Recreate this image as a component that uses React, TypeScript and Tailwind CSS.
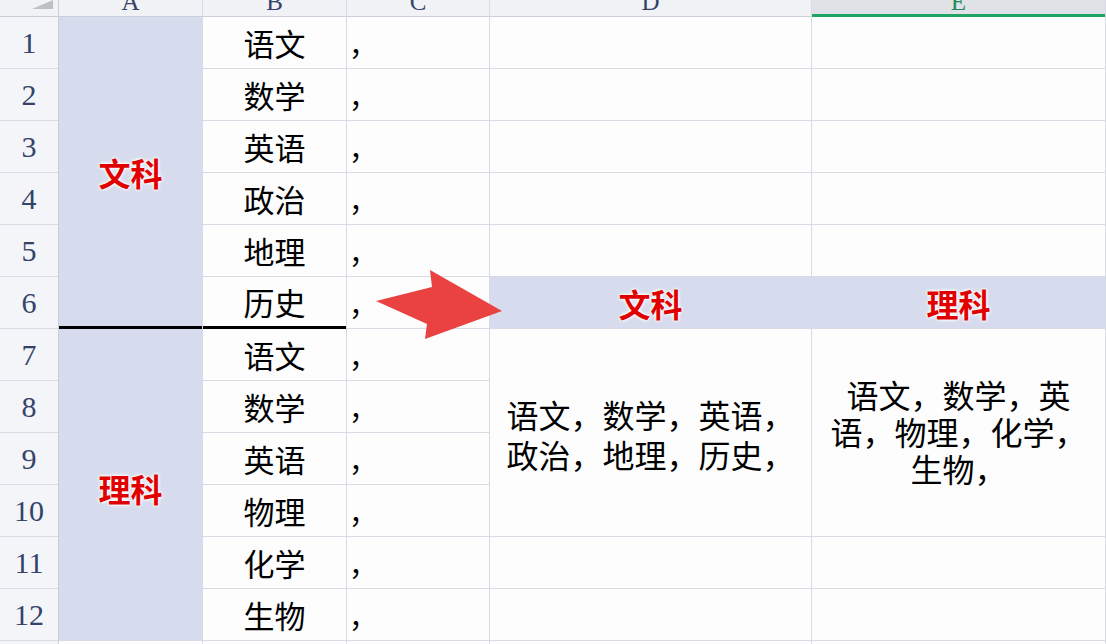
import React from "react"

const subjects = ["语文", "数学", "英语", "政治", "地理", "历史", "语文", "数学", "英语", "物理", "化学", "生物"]

const line = "border-[#d7dbe4]"
const redLabel =
  "text-[32px] font-bold text-[#e00000] leading-none [text-shadow:0_0_2px_#fff,0_0_3px_#fff,0_0_4px_#fff]"

function ColHead({ label, active }: { label: string; active?: boolean }) {
  return (
    <div
      className={`h-[17px] shrink-0 overflow-hidden flex justify-center font-['Liberation_Serif',serif] ${
        active
          ? "bg-[#e1e2e7] border-b-[3px] border-b-[#1fa463] text-[#1f8c5c]"
          : "bg-[#f1f2f5] border-b border-b-[#c9ced8] text-[#33436a]"
      }`}
    >
      <span className="text-[25px] leading-none mt-[-11px]">{label}</span>
    </div>
  )
}

function Blank({ tall }: { tall?: boolean }) {
  return <div className={`${tall ? "h-[52px]" : "h-[30px]"} shrink-0 border-b ${line}`} />
}

export default function App() {
  return (
    <div className="relative w-[1106px] h-[644px] overflow-hidden bg-[#fdfdfe] font-['Noto_Sans_CJK_SC','Noto_Sans',sans-serif]">
      <div className="flex">
        {/* row numbers */}
        <div className="w-[59px] flex flex-col border-r border-r-[#c9ced8] bg-[#f4f5f8]">
          <div className="relative h-[17px] shrink-0 bg-[#f1f2f5] border-b border-b-[#c9ced8]">
            <svg className="absolute left-[32px] top-0" width="21" height="9" viewBox="0 0 21 9">
              <polygon points="0,9 21,9 21,0" fill="#bfc0c3" />
            </svg>
          </div>
          {subjects.map((_, i) => (
            <div
              key={"rn" + i}
              className={`h-[52px] shrink-0 flex items-center justify-center border-b ${line} text-[#33436a] text-[30px] leading-none font-['Liberation_Serif',serif]`}
            >
              {i + 1}
            </div>
          ))}
          <Blank />
        </div>

        {/* column A */}
        <div className={`w-[144px] flex flex-col border-r ${line}`}>
          <ColHead label="A" />
          <div className="h-[312px] shrink-0 flex items-center justify-center bg-[#d6dced] border-b-[3px] border-b-black">
            <span className={redLabel}>文科</span>
          </div>
          <div className={`h-[312px] shrink-0 flex items-center justify-center bg-[#d6dced] border-b ${line}`}>
            <span className={`${redLabel} mt-[6px]`}>理科</span>
          </div>
          <Blank />
        </div>

        {/* column B */}
        <div className={`w-[144px] flex flex-col border-r ${line}`}>
          <ColHead label="B" />
          {subjects.map((s, i) => (
            <div
              key={"b" + i}
              className={`h-[52px] shrink-0 flex items-center justify-center text-[31px] leading-none text-black ${
                i === 5 ? "border-b-[3px] border-b-black" : "border-b " + line
              }`}
            >
              {s}
            </div>
          ))}
          <Blank />
        </div>

        {/* column C */}
        <div className={`w-[143px] flex flex-col border-r ${line}`}>
          <ColHead label="C" />
          {subjects.map((_, i) => (
            <div key={"c" + i} className={`h-[52px] shrink-0 flex items-center pl-[2px] text-[28px] leading-none text-black border-b ${line}`}>
              <span className="mt-[2px]">，</span>
            </div>
          ))}
          <Blank />
        </div>

        {/* column D */}
        <div className={`w-[322px] flex flex-col border-r ${line}`}>
          <ColHead label="D" />
          {[0, 1, 2, 3, 4].map((i) => (
            <Blank key={"d" + i} tall />
          ))}
          <div className={`h-[52px] shrink-0 flex items-center justify-center bg-[#d6dced] border-b ${line}`}>
            <span className={redLabel}>文科</span>
          </div>
          <div className={`h-[208px] shrink-0 flex items-center justify-center text-center text-[32px] leading-[40px] text-black border-b ${line}`}>
            <p className="mt-[2px]">
              语文，数学，英语，
              <br />
              政治，地理，历史，
            </p>
          </div>
          <Blank tall />
          <Blank tall />
          <Blank />
        </div>

        {/* column E */}
        <div className={`w-[294px] flex flex-col border-r ${line}`}>
          <ColHead label="E" active />
          {[0, 1, 2, 3, 4].map((i) => (
            <Blank key={"e" + i} tall />
          ))}
          <div className={`h-[52px] shrink-0 flex items-center justify-center bg-[#d6dced] border-b ${line}`}>
            <span className={redLabel}>理科</span>
          </div>
          <div className={`h-[208px] shrink-0 flex items-center justify-center text-center text-[32px] leading-[37px] text-black border-b ${line}`}>
            <p className="mt-[-2px]">
              语文，数学，英
              <br />
              语，物理，化学，
              <br />
              生物，
            </p>
          </div>
          <Blank tall />
          <Blank tall />
          <Blank />
        </div>
      </div>

      {/* arrow */}
      <svg className="absolute left-0 top-0 pointer-events-none" width="1106" height="644">
        <polygon points="376,301 432,287 430,270 502,311 425,339 427,324" fill="#ea4141" />
      </svg>
    </div>
  )
}
